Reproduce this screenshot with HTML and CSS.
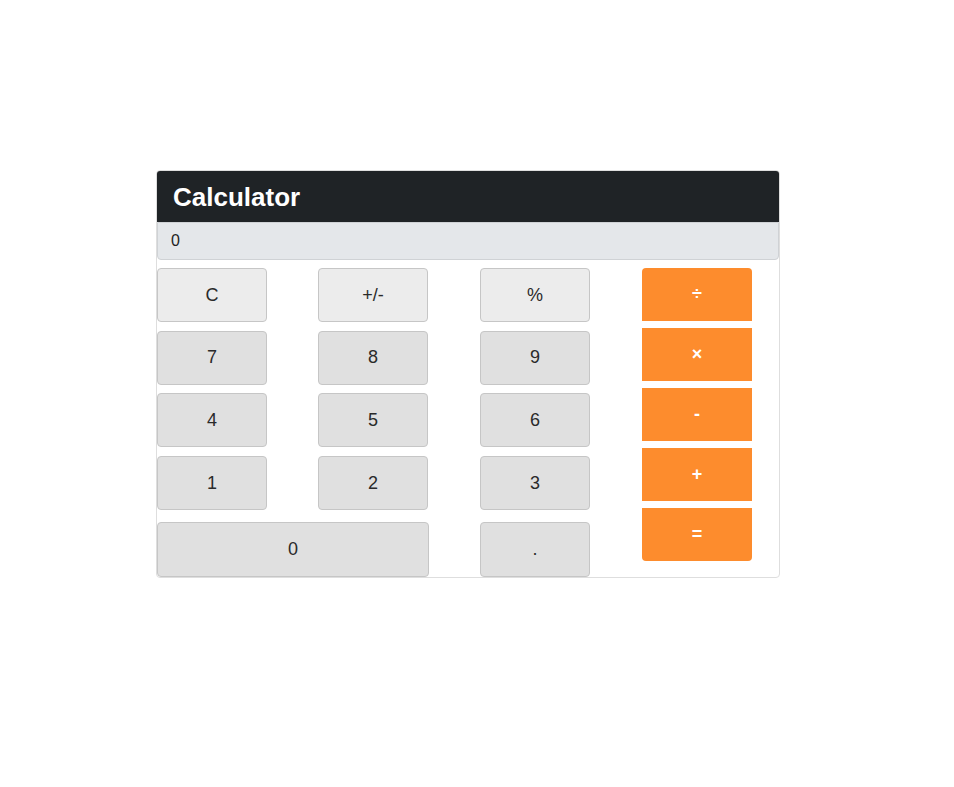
FILE: index.html
```html
<!DOCTYPE html>
<html>
<head>
<meta charset="utf-8">
<link rel="stylesheet" href="styles.css">
</head>
<body>
<div class="card">
  <div class="card-header">Calculator</div>
  <div class="display">0</div>
  <div class="keys">
    <div class="pad">
      <button class="key light">C</button>
      <button class="key light">+/-</button>
      <button class="key light">%</button>
      <button class="key">7</button>
      <button class="key">8</button>
      <button class="key">9</button>
      <button class="key">4</button>
      <button class="key">5</button>
      <button class="key">6</button>
      <button class="key">1</button>
      <button class="key">2</button>
      <button class="key">3</button>
      <button class="key zero last">0</button>
      <button class="key last">.</button>
    </div>
    <div class="ops">
      <button class="op first">÷</button>
      <button class="op">×</button>
      <button class="op">-</button>
      <button class="op">+</button>
      <button class="op end">=</button>
    </div>
  </div>
</div>
</body>
</html>
```
FILE: styles.css
```css
* { box-sizing: border-box; }
html, body { margin: 0; padding: 0; background: #fff; }
body {
  font-family: "Liberation Sans", Arial, Helvetica, sans-serif;
  color: #212529;
}
.card {
  margin: 170px 0 0 156px;
  width: 624px;
  height: 408px;
  border: 1px solid #dedede;
  border-radius: 4px;
  background: #fff;
}
.card-header {
  height: 51px;
  background: #1f2326;
  color: #fff;
  font-size: 26px;
  font-weight: bold;
  padding: 11px 16px 0;
  line-height: 30px;
  border-radius: 3px 3px 0 0;
}
.display {
  height: 38px;
  background: #e4e7ea;
  border: 1px solid #cfd2d5;
  border-radius: 0 0 4px 4px;
  font-size: 16px;
  line-height: 36px;
  padding-left: 13px;
  color: #222;
}
.keys {
  display: flex;
  margin-top: 8px;
}
.pad {
  display: grid;
  grid-template-columns: 161px 162px 162px;
  grid-template-rows: 54px 54px 54px 55px 55px;
  row-gap: 8.7px;
}
.key {
  width: 110px;
  height: 54px;
  border: 1px solid #c6c6c6;
  border-radius: 4px;
  background: #e0e0e0;
  color: #2a2a2a;
  font-family: inherit;
  font-size: 18px;
  padding: 0;
}
.key.light { background: #ececec; }
.key.last { margin-top: 2px; height: 55px; }
.key.zero { grid-column: span 2; width: 272px; }
.ops {
  display: flex;
  flex-direction: column;
  gap: 7px;
}
.op {
  width: 110px;
  height: 53px;
  border: none;
  background: #fd8c2d;
  color: #fff;
  font-family: inherit;
  font-size: 18px;
  font-weight: bold;
  padding: 0;
}
.op.first { border-radius: 4px 4px 0 0; }
.op.end { border-radius: 0 0 4px 4px; }
```
